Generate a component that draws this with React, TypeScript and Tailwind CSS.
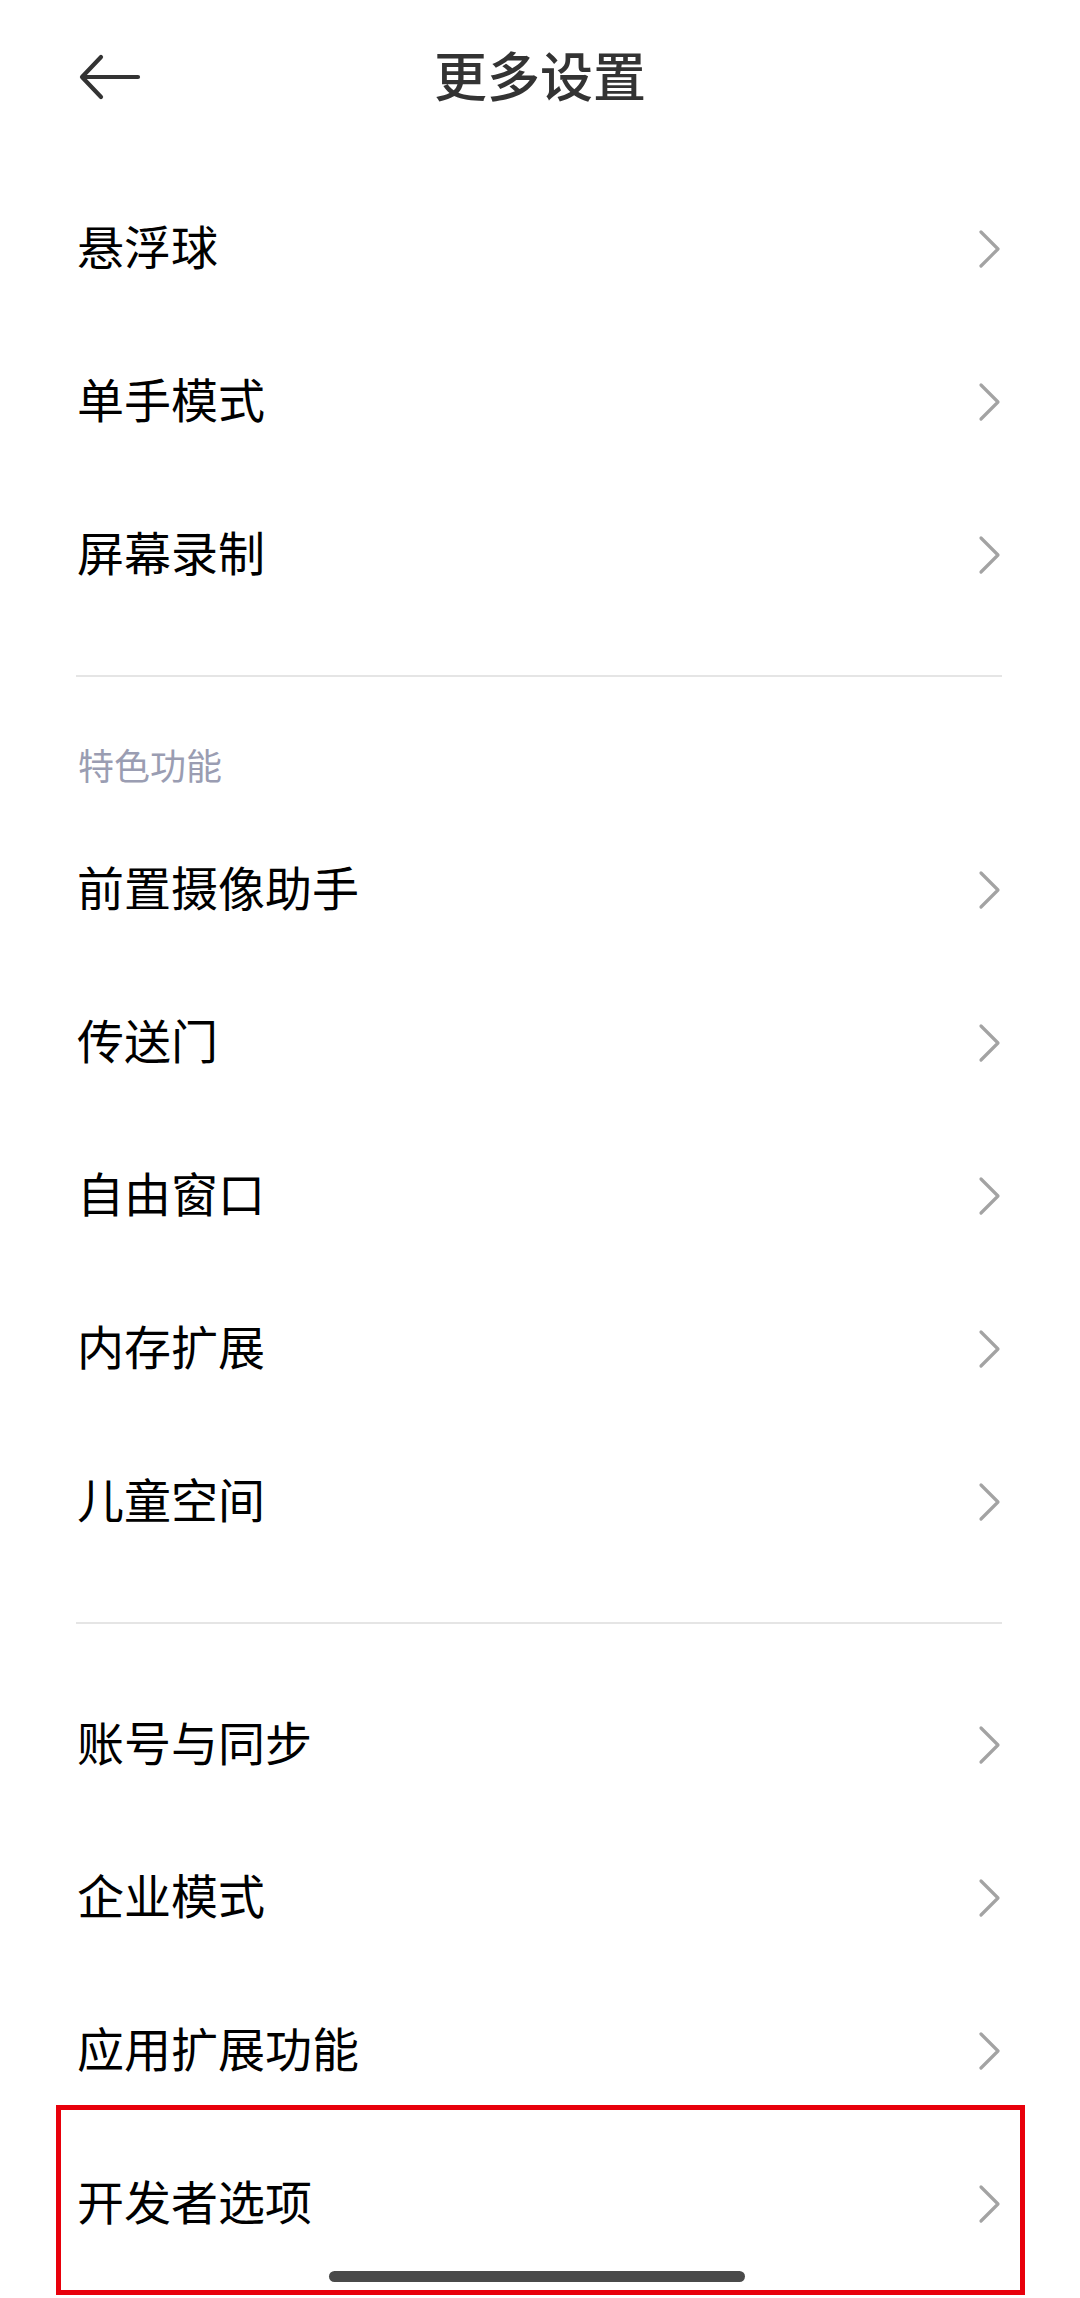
import React from 'react';

const groups: { title?: string; items: string[] }[] = [
  { items: ['悬浮球', '单手模式', '屏幕录制'] },
  { title: '特色功能', items: ['前置摄像助手', '传送门', '自由窗口', '内存扩展', '儿童空间'] },
  { items: ['账号与同步', '企业模式', '应用扩展功能', '开发者选项'] },
];

function Chevron() {
  return (
    <svg width="26" height="40" viewBox="0 0 26 40" fill="none">
      <polyline points="4,3 21,20 4,37" stroke="#a3a3a3" strokeWidth="3.2" strokeLinecap="round" strokeLinejoin="round" />
    </svg>
  );
}

function Row({ label, marked }: { label: string; marked?: boolean }) {
  return (
    <div className="relative flex h-[153px] items-center justify-between px-[77px]">
      <span className="pb-[8px] text-[47px] leading-none text-black">{label}</span>
      <Chevron />
      {marked && (
        // red highlight box drawn over the row
        <div className="absolute left-[56px] top-[-22px] h-[190px] w-[969px] border-[5px] border-[#e8000b]" />
      )}
    </div>
  );
}

export default function App() {
  return (
    <div
      className="relative h-[2298px] w-[1080px] overflow-hidden bg-white"
      style={{ fontFamily: '"Noto Sans CJK SC", "Noto Sans", sans-serif' }}
    >
      <header className="grid h-[172px] grid-cols-[1fr_auto_1fr] items-start pt-[45px]">
        <div className="flex pl-[78px] pt-[9px]">
          <svg width="64" height="46" viewBox="0 0 64 46" fill="none">
            <polyline points="23,3 4,23 23,43" stroke="#333333" strokeWidth="4.2" strokeLinecap="round" strokeLinejoin="round" />
            <line x1="5" y1="23" x2="60" y2="23" stroke="#333333" strokeWidth="4.2" strokeLinecap="round" />
          </svg>
        </div>
        <h1 className="text-[53px] font-medium leading-[58px] text-[#333333]">更多设置</h1>
        <div />
      </header>

      {groups.map((g, gi) => (
        <section key={gi}>
          {gi > 0 && (
            <div className="py-[44px] pl-[76px] pr-[78px]">
              <div className="h-[2px] bg-[#e5e5e5]" />
            </div>
          )}
          {g.title && (
            <div className="mt-[-44px] pt-[69px] pb-[31px] pl-[78px] text-[36px] leading-[36px] text-[#9a9db2]">
              {g.title}
            </div>
          )}
          {g.items.map((it) => (
            <Row key={it} label={it} marked={it === '开发者选项'} />
          ))}
        </section>
      ))}

      <div className="absolute bottom-[16px] left-[329px] h-[11px] w-[416px] rounded-full bg-[#4a4a4a]" />
    </div>
  );
}
